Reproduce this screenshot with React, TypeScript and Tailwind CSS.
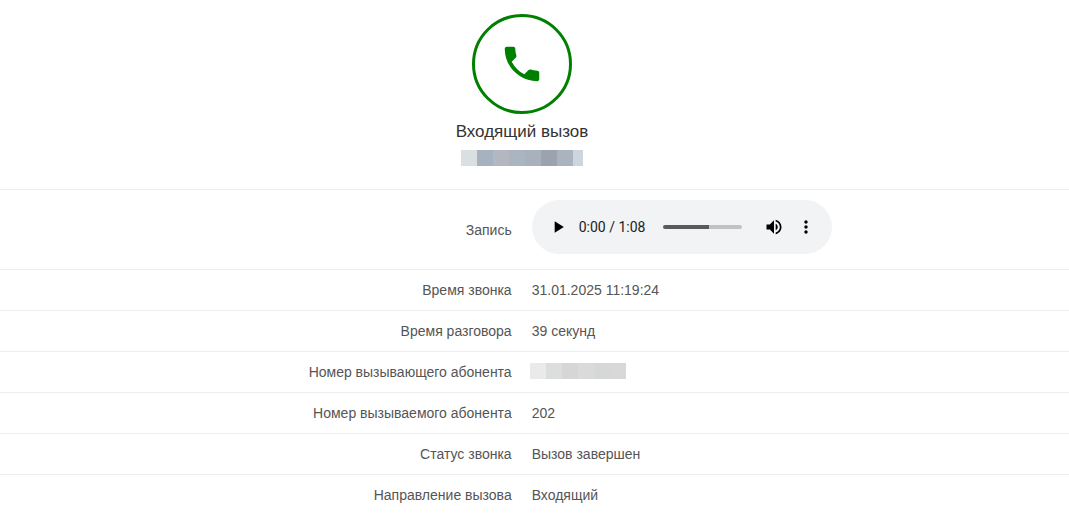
import React, { useState } from 'react';

interface CallField {
  label: string;
  value: string | null;
}

const FIELDS: CallField[] = [
  { label: 'Время звонка', value: '31.01.2025 11:19:24' },
  { label: 'Время разговора', value: '39 секунд' },
  { label: 'Номер вызывающего абонента', value: null },
  { label: 'Номер вызываемого абонента', value: '202' },
  { label: 'Статус звонка', value: 'Вызов завершен' },
  { label: 'Направление вызова', value: 'Входящий' },
];

const AudioPlayer: React.FC = () => {
  const [position, setPosition] = useState<number>(0);
  const time = `${Math.floor(position / 60)}:${String(position % 60).padStart(2, '0')}`;

  return (
    <div className="flex h-[54px] w-[300px] items-center rounded-full bg-[#f1f3f4] px-2.5 text-black">
      <button type="button" aria-label="Воспроизвести" className="flex size-8 shrink-0 items-center justify-center">
        <svg viewBox="0 0 24 24" className="size-5" fill="currentColor">
          <path d="M8 5v14l11-7z" />
        </svg>
      </button>
      <span className="ml-[5px] w-[68px] whitespace-nowrap font-['Roboto',sans-serif] text-sm text-[#202124]">{time} / 1:08</span>
      <input
        type="range"
        min={0}
        max={68}
        value={position}
        onChange={(e) => setPosition(Number(e.target.value))}
        aria-label="Позиция записи"
        className="mx-4 h-1 min-w-0 flex-1 appearance-none rounded-full bg-[linear-gradient(to_right,#5a5a5c_58%,#c1c2c3_58%)] [&::-webkit-slider-thumb]:size-1 [&::-webkit-slider-thumb]:appearance-none"
      />
      <button type="button" aria-label="Громкость" className="flex size-8 shrink-0 items-center justify-center">
        <svg viewBox="0 0 24 24" className="size-5" fill="currentColor">
          <path d="M3 9v6h4l5 5V4L7 9H3zm13.5 3c0-1.77-1.02-3.29-2.5-4.03v8.05c1.48-.73 2.5-2.25 2.5-4.02zM14 3.23v2.06c2.89.86 5 3.54 5 6.71s-2.11 5.85-5 6.71v2.06c4.01-.91 7-4.49 7-8.77s-2.99-7.86-7-8.77z" />
        </svg>
      </button>
      <button type="button" aria-label="Ещё" className="flex size-8 shrink-0 items-center justify-center">
        <svg viewBox="0 0 24 24" className="size-5" fill="currentColor">
          <path d="M12 8c1.1 0 2-.9 2-2s-.9-2-2-2-2 .9-2 2 .9 2 2 2zm0 2c-1.1 0-2 .9-2 2s.9 2 2 2 2-.9 2-2-.9-2-2-2zm0 6c-1.1 0-2 .9-2 2s.9 2 2 2 2-.9 2-2-.9-2-2-2z" />
        </svg>
      </button>
    </div>
  );
};

export default function App() {
  return (
    <div className="min-h-screen bg-white font-['Liberation_Sans',Arial,sans-serif] text-sm leading-5 text-[#555]">
      <header className="flex flex-col items-center pt-3.5 pr-[25px] pb-[23px]">
        <div className="flex size-[100px] items-center justify-center rounded-full border-3 border-[#008000] text-[#008000]">
          <svg viewBox="0 0 24 24" className="size-[46px]" fill="currentColor">
            <path d="M20 15.5c-1.25 0-2.45-.2-3.57-.57-.35-.11-.74-.03-1.02.24l-2.2 2.2c-2.83-1.44-5.15-3.75-6.59-6.58l2.2-2.21c.28-.27.36-.66.25-1.01C8.7 6.45 8.5 5.25 8.5 4c0-.55-.45-1-1-1H4c-.55 0-1 .45-1 1 0 9.39 7.61 17 17 17 .55 0 1-.45 1-1v-3.5c0-.55-.45-1-1-1z" />
          </svg>
        </div>
        <h1 className="mt-2 text-[17px] leading-5 text-[#333]">Входящий вызов</h1>
        {/* Masked phone number */}
        <div className="mt-2 flex h-4">
          <span className="w-4 bg-[#dadfe2]" />
          <span className="w-4 bg-[#a6b2bf]" />
          <span className="w-4 bg-[#b3b8c0]" />
          <span className="w-4 bg-[#abb5c2]" />
          <span className="w-4 bg-[#a8b2bd]" />
          <span className="w-4 bg-[#9ca3af]" />
          <span className="w-4 bg-[#aab4bf]" />
          <span className="w-2.5 bg-[#cdd6de]" />
        </div>
      </header>

      <table className="w-full table-fixed border-collapse">
        <colgroup>
          <col className="w-[48.8%]" />
          <col />
        </colgroup>
        <tbody>
          <tr className="border-t border-[#eee]">
            <th scope="row" className="p-2.5 text-right font-normal">Запись</th>
            <td className="px-2.5 pt-2.5 pb-[15px]">
              <AudioPlayer />
            </td>
          </tr>
          {FIELDS.map(({ label, value }) => (
            <tr key={label} className="border-t border-[#eee]">
              <th scope="row" className="p-2.5 text-right font-normal">{label}</th>
              <td className="p-2.5">
                {value ?? (
                  <div className="mb-0.5 -ml-0.5 flex h-4">
                    <span className="w-4 bg-[#eaeaea]" />
                    <span className="w-4 bg-[#dcdedd]" />
                    <span className="w-4 bg-[#d7d6d6]" />
                    <span className="w-4 bg-[#dadada]" />
                    <span className="w-4 bg-[#d6d8d7]" />
                    <span className="w-4 bg-[#d8d8d8]" />
                  </div>
                )}
              </td>
            </tr>
          ))}
        </tbody>
      </table>
    </div>
  );
}
